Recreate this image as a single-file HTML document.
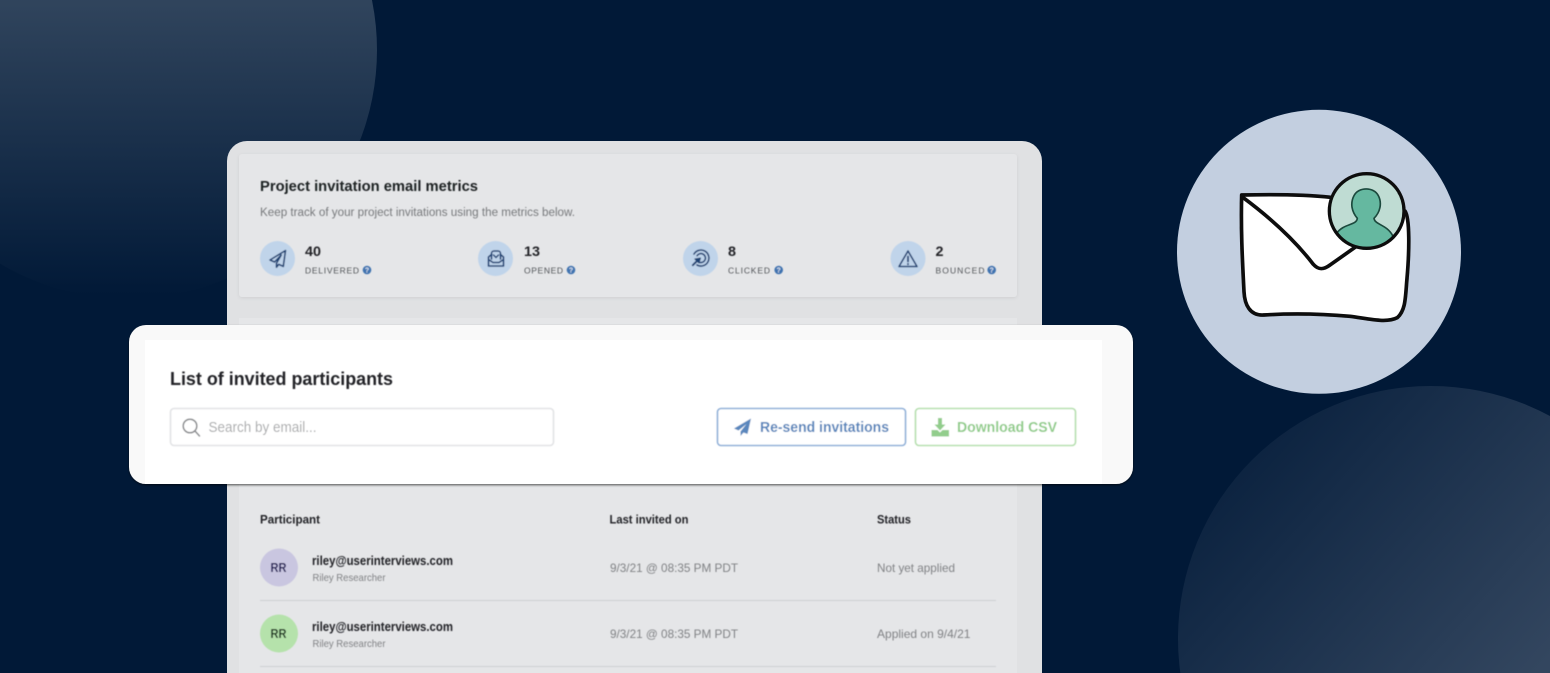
<!DOCTYPE html>
<html lang="en">
<head>
<meta charset="utf-8">
<title>Project invitation email metrics</title>
<style>
html,body{margin:0;padding:0;width:1550px;height:673px;overflow:hidden;background:#011937}
svg{display:block;position:absolute;left:0;top:0}
text{font-family:"Liberation Sans",Arial,sans-serif}
.soft{filter:url(#b)}
</style>
</head>
<body>
<svg width="1550" height="673" viewBox="0 0 1550 673" xmlns="http://www.w3.org/2000/svg">
<defs>
<linearGradient id="g1" gradientUnits="userSpaceOnUse" x1="0" y1="-10" x2="0" y2="295">
<stop offset="0" stop-color="#32465e"/><stop offset="1" stop-color="#011937"/>
</linearGradient>
<linearGradient id="g2" gradientUnits="userSpaceOnUse" x1="1260" y1="440" x2="1530" y2="680">
<stop offset="0" stop-color="#0c2340"/><stop offset="1" stop-color="#33465f"/>
</linearGradient>
<filter id="b" x="-5%" y="-5%" width="110%" height="110%"><feGaussianBlur stdDeviation=".4"/></filter>
<filter id="sh" x="-5%" y="-10%" width="110%" height="125%"><feDropShadow dx="0" dy="1" stdDeviation="1.5" flood-color="#000" flood-opacity=".08"/></filter>
<filter id="sh2" x="-5%" y="-10%" width="110%" height="125%"><feDropShadow dx="0" dy="1.2" stdDeviation="1" flood-color="#000" flood-opacity=".6"/></filter>
<clipPath id="cc"><circle cx="590" cy="318" r="112"/></clipPath>
<clipPath id="page"><rect width="1550" height="673"/></clipPath>
</defs>

<rect width="1550" height="673" fill="#011937"/>
<g clip-path="url(#page)">
<circle cx="128" cy="50" r="249" fill="url(#g1)"/>
<circle cx="1430.6" cy="638.6" r="252.6" fill="url(#g2)"/>
</g>

<!-- main card -->
<path d="M247 141H1022a20 20 0 0 1 20 20V673H227V161a20 20 0 0 1 20-20Z" fill="#e0e1e3"/>
<rect x="239" y="154" width="778" height="143" rx="3" fill="#e5e6e8" filter="url(#sh)"/>
<rect x="239" y="318" width="778" height="355" fill="#e5e6e8"/>

<g class="soft">
<text font-weight="700" x="260" y="191" font-size="15" fill="#1e2023" textLength="218" lengthAdjust="spacingAndGlyphs">Project invitation email metrics</text>
<text x="260" y="216" font-size="11.5" fill="#77797c" textLength="315" lengthAdjust="spacingAndGlyphs">Keep track of your project invitations using the metrics below.</text>

<circle cx="277.5" cy="258.5" r="17.5" fill="#c0d4ea"/>
<circle cx="495.5" cy="258.5" r="17.5" fill="#c0d4ea"/>
<circle cx="700.5" cy="258.5" r="17.5" fill="#c0d4ea"/>
<circle cx="908" cy="258.5" r="17.5" fill="#c0d4ea"/>

<g fill="none" stroke="#1f4273" stroke-width="1.6" stroke-linejoin="round" stroke-linecap="round">
<!-- paper plane -->
<path d="M285.5 250.5 270 260l4.6 2 6.6-7-4.7 8.2v4l2.2-2.8 4.6 2Z"/>
<!-- open envelope -->
<path d="M488.500 257v9h15v-9l-3-2.500M488.500 257l3-2.500M488.500 259.500l4.500 3h6l4.500-3"/>
<path d="M491.500 259v-5.500a2.500 2.500 0 0 1 2.500-2.500h4a2.500 2.500 0 0 1 2.500 2.500V259"/>
<path d="M493.500 255l2.500 2.500 2.500-2.500" stroke-width="1.500"/>
<!-- target click -->
<path d="M694 254A8 8 0 1 1 697 265"/>
<path d="M697.100 255.700A4.500 4.500 0 1 1 700 262.500"/>
<path d="M697 261 692.800 265.200" stroke-width="2"/>
<path d="M700.500 258 694.800 259 699 263Z" fill="#1f4273" stroke-width="1"/>
<!-- warning -->
<path d="M908 251 917 266.500H899Z"/>
<path d="M908 256.500v5" stroke-width="1.800"/>
<path d="M908 263.900v.4" stroke-width="1.800"/>
</g>

<g font-size="14" fill="#222427" font-weight="700">
<text x="305" y="256" textLength="16" lengthAdjust="spacingAndGlyphs">40</text>
<text x="524" y="256" textLength="16" lengthAdjust="spacingAndGlyphs">13</text>
<text x="728" y="256" textLength="8" lengthAdjust="spacingAndGlyphs">8</text>
<text x="935.500" y="256" textLength="8" lengthAdjust="spacingAndGlyphs">2</text>
</g>
<g font-size="8.500" fill="#505357">
<text x="305" y="273.500" textLength="54">DELIVERED</text>
<text x="524" y="273.500" textLength="39">OPENED</text>
<text x="728" y="273.500" textLength="42">CLICKED</text>
<text x="935.500" y="273.500" textLength="49">BOUNCED</text>
</g>
<g fill="#4073b0">
<circle cx="367" cy="270" r="4.300"/><circle cx="571" cy="270" r="4.300"/><circle cx="778.700" cy="270" r="4.300"/><circle cx="991.700" cy="270" r="4.300"/>
</g>
<g fill="#dfe7f2" font-size="7" text-anchor="middle" font-weight="700">
<text x="367" y="272.500">?</text><text x="571" y="272.500">?</text><text x="778.700" y="272.500">?</text><text x="991.700" y="272.500">?</text>
</g>

<!-- table -->
<g font-size="12" fill="#222427" font-weight="700">
<text x="260" y="523.500" textLength="60" lengthAdjust="spacingAndGlyphs">Participant</text>
<text x="609.500" y="523.500" textLength="79" lengthAdjust="spacingAndGlyphs">Last invited on</text>
<text x="877" y="523.500" textLength="34" lengthAdjust="spacingAndGlyphs">Status</text>
</g>
<circle cx="279" cy="567.500" r="19" fill="#c9c6e0"/>
<circle cx="279" cy="633.500" r="19" fill="#b5e2ab"/>
<text x="278.500" y="572" font-size="12.500" font-weight="700" fill="#1d1856" text-anchor="middle" textLength="16" lengthAdjust="spacingAndGlyphs">RR</text>
<text x="278.500" y="638" font-size="12.500" font-weight="700" fill="#12301a" text-anchor="middle" textLength="16" lengthAdjust="spacingAndGlyphs">RR</text>
<g font-size="12.500" fill="#222427" font-weight="700">
<text x="312" y="565" textLength="141" lengthAdjust="spacingAndGlyphs">riley@userinterviews.com</text>
<text x="312" y="631" textLength="141" lengthAdjust="spacingAndGlyphs">riley@userinterviews.com</text>
</g>
<g font-size="10.500" fill="#808285">
<text x="312.500" y="581" textLength="73" lengthAdjust="spacingAndGlyphs">Riley Researcher</text>
<text x="312.500" y="647" textLength="73" lengthAdjust="spacingAndGlyphs">Riley Researcher</text>
</g>
<g font-size="12" fill="#808285">
<text x="610" y="572" textLength="128" lengthAdjust="spacingAndGlyphs">9/3/21 @ 08:35 PM PDT</text>
<text x="610" y="638" textLength="128" lengthAdjust="spacingAndGlyphs">9/3/21 @ 08:35 PM PDT</text>
<text x="877" y="572" textLength="78" lengthAdjust="spacingAndGlyphs">Not yet applied</text>
<text x="877" y="638" textLength="93.500" lengthAdjust="spacingAndGlyphs">Applied on 9/4/21</text>
</g>
<rect x="260" y="600" width="736" height="1" fill="#cdcfd2"/>
<rect x="260" y="666" width="736" height="1" fill="#cdcfd2"/>
</g>

<!-- highlighted overlay -->
<rect x="129" y="325" width="1004" height="159" rx="17" fill="#f9f9f9" filter="url(#sh2)"/>
<rect x="145" y="340" width="957" height="144" fill="#fff"/>
<g class="soft">
<text x="170" y="385" font-size="18" font-weight="700" fill="#222427" textLength="223" lengthAdjust="spacingAndGlyphs">List of invited participants</text>
<rect x="170.500" y="408.500" width="383" height="37" rx="3.500" fill="#fff" stroke="#e2e3e5" stroke-width="1.600"/>
<g fill="none" stroke="#85878a" stroke-width="1.500" stroke-linecap="round">
<circle cx="190" cy="426" r="6.800"/><path d="M195 431l4.500 5"/>
</g>
<text x="208.500" y="432" font-size="14.500" fill="#a9aaac" textLength="108" lengthAdjust="spacingAndGlyphs">Search by email...</text>

<rect x="717.500" y="408.500" width="188" height="37" rx="3.500" fill="#fff" stroke="#8fb0d8" stroke-width="1.600"/>
<path d="M751 418.500 734 428.500l4.500 2 8-6.500-6 7.500v4.500l3-3.500 4 1.500Z" fill="#5a87bd"/>
<text x="760" y="432" font-size="14.500" font-weight="700" fill="#5584bb" textLength="129" lengthAdjust="spacingAndGlyphs">Re-send invitations</text>

<rect x="915.500" y="408.500" width="160" height="37" rx="3.500" fill="#fff" stroke="#b5dfae" stroke-width="1.600"/>
<path d="M938 418h4v6.500h3.500l-5.500 6-5.500-6H938Z" fill="#92cd8c"/>
<path d="M931.500 430h6l2.500 2.500 2.500-2.500h6.500v6.500h-17.500Z" fill="#92cd8c"/>
<text x="957" y="432" font-size="14.500" font-weight="700" fill="#8fcc89" textLength="100" lengthAdjust="spacingAndGlyphs">Download CSV</text>
</g>

<!-- illustration -->
<circle cx="1319" cy="251.800" r="142" fill="#c3cfe0"/>
<svg x="1170" y="105" width="300" height="295" viewBox="0 0 900 885">
<g class="soft" stroke="#0a0a0a" stroke-width="11" stroke-linejoin="round" stroke-linecap="round">
<path d="M215 270C300 268 400 268 482 277L705 318C720 340 718 440 711 520C706 575 708 615 682 638C650 655 600 642 540 634C450 626 360 625 280 630C240 632 224 600 222 560C218 480 212 380 215 270Z" fill="#fff"/>
<path d="M217 276C290 330 370 400 430 478C445 495 460 495 480 480L558 425" fill="none"/>
<circle cx="590" cy="318" r="112" fill="#bfdcd3" stroke="none"/>
<g clip-path="url(#cc)">
<path d="M500 385C520 355 560 362 562 340C545 320 540 295 552 272C565 245 612 245 625 272C637 295 630 322 612 340C615 360 650 358 668 392L668 440L500 440Z" fill="#65b8a0" stroke="#1c4a3e" stroke-width="5"/>
</g>
<circle cx="590" cy="318" r="112" fill="none" stroke-width="10"/>
</g>
</svg>
</svg>
</body>
</html>
